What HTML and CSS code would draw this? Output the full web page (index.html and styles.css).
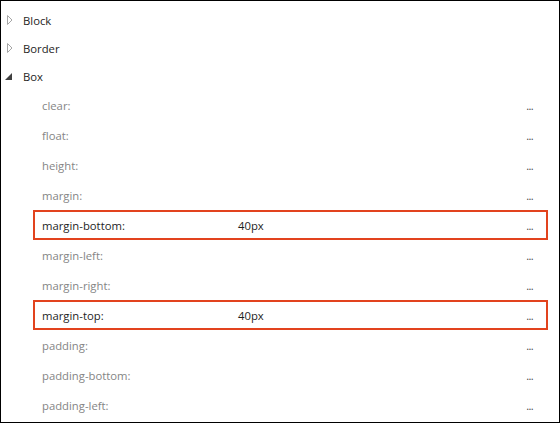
FILE: index.html
```html
<!DOCTYPE html>
<html>
<head>
<meta charset="utf-8">
<link rel="stylesheet" href="styles.css">
</head>
<body>
<div class="panel">
  <div class="cat">
    <span class="tri"><svg width="6" height="10" viewBox="0 0 6 10"><path d="M0.5 0.5 L5 5 L0.5 9.5 Z" fill="none" stroke="#a6a6a6" stroke-width="1"/></svg></span>
    <span class="cat-name">Block</span>
  </div>
  <div class="cat">
    <span class="tri"><svg width="6" height="10" viewBox="0 0 6 10"><path d="M0.5 0.5 L5 5 L0.5 9.5 Z" fill="none" stroke="#a6a6a6" stroke-width="1"/></svg></span>
    <span class="cat-name">Border</span>
  </div>
  <div class="cat">
    <span class="tri open"><svg width="7" height="7" viewBox="0 0 7 7"><path d="M7 0 L7 7 L0 7 Z" fill="#404040"/></svg></span>
    <span class="cat-name">Box</span>
  </div>
  <div class="props">
    <div class="prop"><span class="name">clear:</span><span class="val"></span><span class="more">...</span></div>
    <div class="prop"><span class="name">float:</span><span class="val"></span><span class="more">...</span></div>
    <div class="prop"><span class="name">height:</span><span class="val"></span><span class="more">...</span></div>
    <div class="prop"><span class="name">margin:</span><span class="val"></span><span class="more">...</span></div>
    <div class="prop set"><span class="name">margin-bottom:</span><span class="val">40px</span><span class="more">...</span></div>
    <div class="prop"><span class="name">margin-left:</span><span class="val"></span><span class="more">...</span></div>
    <div class="prop"><span class="name">margin-right:</span><span class="val"></span><span class="more">...</span></div>
    <div class="prop set"><span class="name">margin-top:</span><span class="val">40px</span><span class="more">...</span></div>
    <div class="prop"><span class="name">padding:</span><span class="val"></span><span class="more">...</span></div>
    <div class="prop"><span class="name">padding-bottom:</span><span class="val"></span><span class="more">...</span></div>
    <div class="prop"><span class="name">padding-left:</span><span class="val"></span><span class="more">...</span></div>
  </div>
</div>
</body>
</html>
```

FILE: styles.css
```css
html, body {
  margin: 0;
  padding: 0;
  background: #fff;
}
body {
  font-family: "Open Sans", "Noto Sans", sans-serif;
  font-size: 11.3px;
}
.panel {
  width: 560px;
  height: 423px;
  box-sizing: border-box;
  border: 1px solid #000;
  padding-top: 5px;
  overflow: hidden;
}
.cat {
  height: 28px;
  display: flex;
  align-items: center;
  color: #1e1e1e;
}
.tri {
  width: 22px;
  box-sizing: border-box;
  padding-left: 6px;
  display: flex;
  align-items: center;
}
.tri.open {
  padding-left: 4px;
}
.props {
  display: flex;
  flex-direction: column;
  margin-left: 32px;
  width: 515px;
}
.prop {
  height: 30px;
  box-sizing: border-box;
  border: 2px solid transparent;
  display: flex;
  align-items: center;
  padding-left: 7px;
  padding-right: 13px;
  color: #858585;
}
.prop.set {
  border-color: #e2431e;
  color: #1e1e1e;
}
.name {
  width: 196px;
  flex: none;
}
.val {
  flex: 1;
  color: #1e1e1e;
}
.more {
  color: #4a4a4a;
  letter-spacing: -0.6px;
  font-size: 11px;
}
```
